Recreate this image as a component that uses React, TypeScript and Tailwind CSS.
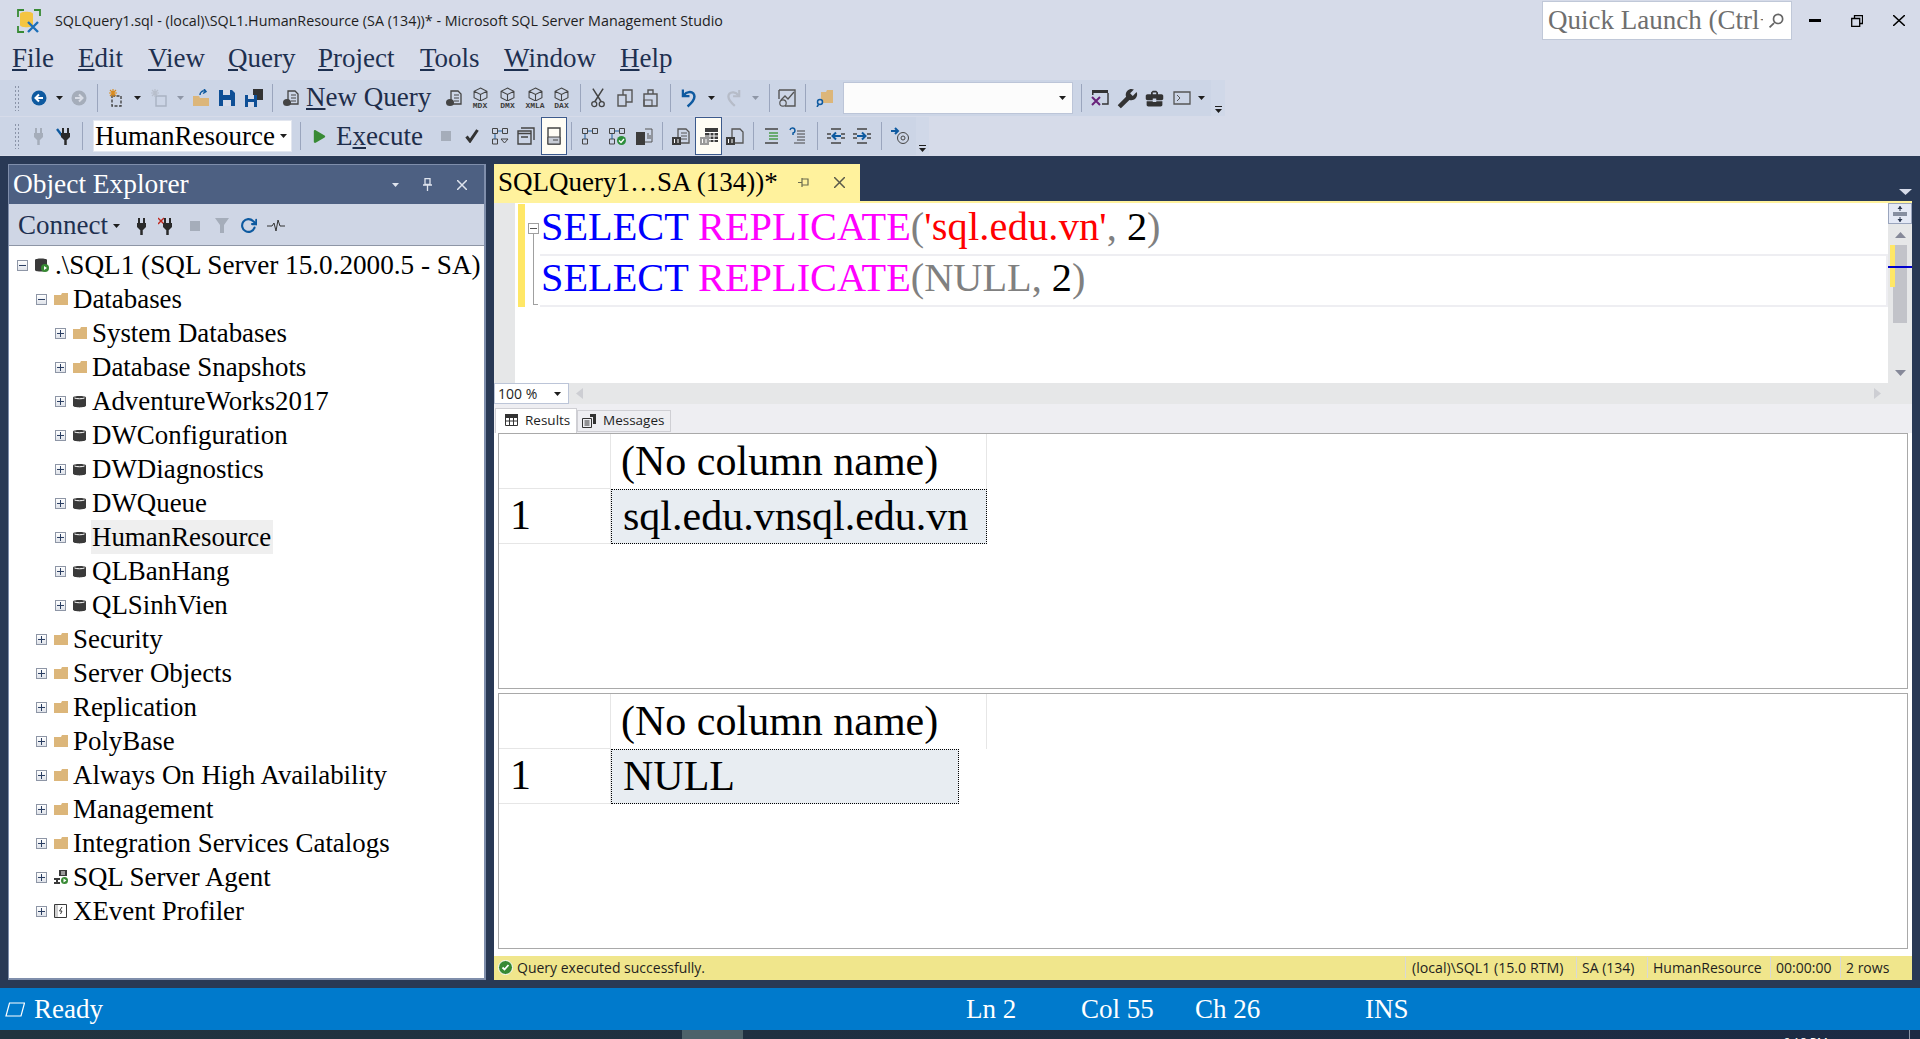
import type { ReactNode } from "react";
import { FaPlay } from "react-icons/fa";
import { FiRotateCw } from "react-icons/fi";
import { MdBuild, MdBusinessCenter, MdSearch } from "react-icons/md";

const serif = "font-['Liberation_Serif',serif]";
const sans = "font-['Open_Sans',sans-serif]";

const Caret = ({ c = "#1e1e1e" }: { c?: string }) => (
  <svg width="7" height="4" viewBox="0 0 7 4"><path d="M0 0h7L3.5 4z" fill={c} /></svg>
);

const Svg = ({ children, w = 18, h = 18 }: { children: ReactNode; w?: number; h?: number }) => (
  <svg className="shrink-0" width={w} height={h} viewBox="0 0 18 18" fill="none">{children}</svg>
);

// toolbar slot: a fixed width box with its content centred
const Slot = ({ w, children, className = "" }: { w: number; children?: ReactNode; className?: string }) => (
  <div style={{ width: w }} className={`h-full flex items-center justify-center shrink-0 ${className}`}>{children}</div>
);

const Sep = () => <div className="w-px h-[28px] bg-[#9aa5bd] shrink-0" />;

const Grip = () => (
  <div className="w-[6px] h-[26px] ml-[14px] shrink-0 bg-[radial-gradient(#8a94a8_1px,transparent_1px)] bg-[length:3px_4px]" />
);

const DocIcon = () => (
  <Svg>
    <path d="M6 2h7l3 3v10H6z" stroke="#444" strokeWidth="1.3" />
    <path d="M9 6h5M9 9h5M9 12h5" stroke="#444" />
    <ellipse cx="5" cy="13.5" rx="4" ry="3.5" fill="#444" />
  </Svg>
);

const CubeIcon = ({ label }: { label: string }) => (
  <div className="relative w-[18px] h-[24px] flex justify-center shrink-0">
    <svg className="mt-[1px]" width="15" height="15" viewBox="0 0 14 14" fill="none"><path d="M7 1l6 3v6l-6 3-6-3V4zM1 4l6 3 6-3M7 7v6" stroke="#444" /></svg>
    <span className="absolute bottom-0 text-[8px] leading-[9px] font-bold text-[#3c3c3c] font-['Liberation_Mono',monospace] bg-[#ccd5e6] px-px">{label}</span>
  </div>
);

const PlugIcon = ({ c = "#2a2a2a", x, link }: { c?: string; x?: boolean; link?: boolean }) => (
  <Svg>
    {x && <path d="M0 1l6 6M6 1L0 7" stroke="#c0261c" strokeWidth="1.4" />}
    {link && <path d="M1 2l6 8" stroke="#0e5aa0" strokeWidth="2.4" />}
    <path d="M7 1v5M12 1v5" stroke={c} strokeWidth="2" />
    <path d="M5 6h9v4l-3 3H8l-3-3z" fill={c} />
    <path d="M9.5 13v5" stroke={c} strokeWidth="2.5" />
  </Svg>
);

const GridDocIcon = ({ kind }: { kind: "text" | "grid" | "file" }) => (
  <Svg>
    {kind === "grid" ? (
      <path d="M5 1h13v14H5z" fill="#3c3c3c" />
    ) : (
      <path d="M6 2h8l3 3v11H6z" stroke="#555" strokeWidth="1.3" />
    )}
    {kind === "grid" && <path d="M5 5.5h13M5 9h13M5 12.5h13M10 5v10M14 5v10" stroke="#fff" />}
    {kind === "text" && <path d="M9 6h6M9 9h6M9 12h6" stroke="#555" />}
    <rect x="0" y="10" width="9" height="8" fill={kind === "grid" ? "#9a9a9a" : "#3c3c3c"} />
    <path d="M2.5 12v4M6 12v4" stroke="#fff" />
  </Svg>
);

const DiagramIcon = ({ badge, tri }: { badge?: boolean; tri?: boolean }) => (
  <Svg>
    <path d="M1.5 1.5h5v5h-5zM11.5 1.5h5v5h-5zM1.5 12h5v5h-5z" stroke="#444" />
    <path d="M7 4h4M4 7v5" stroke="#1c5c9c" />
    {tri && <path d="M10 12h7l-3.5 4z" stroke="#444" />}
    {badge && <circle cx="13.5" cy="13.5" r="4.5" fill="#2c8e3c" />}
    {badge && <path d="M11 13.5l2 2 3-3.5" stroke="#fff" strokeWidth="1.3" />}
  </Svg>
);

const IndentIcon = ({ flip }: { flip?: boolean }) => (
  <svg className="shrink-0" width="18" height="18" viewBox="0 0 18 18" fill="none" style={{ transform: flip ? "scaleX(-1)" : undefined }}>
    <path d="M4 2h10M4 16h10M0 7h4M0 11h4M14 7h4M14 11h4" stroke="#444" strokeWidth="1.4" />
    <path d="M14 9H6M9 5.5L5.5 9 9 12.5" stroke="#0e5aa0" strokeWidth="2" />
  </svg>
);

function MainToolbars() {
  return (
    <div className="flex flex-col mb-[1px] shrink-0">
      <div className="flex h-[36px] items-center mb-[1px]">
        <div className="flex items-center h-full w-[1211px] bg-[#ccd5e6]">
          <Grip />
          <Slot w={11} />
          <Slot w={16}>
            <svg width="16" height="16" viewBox="0 0 16 16"><circle cx="8" cy="8" r="7.5" fill="#0e5aa0" /><path d="M12 8H5M8 4.5L4.5 8 8 11.5" stroke="#fff" strokeWidth="2" fill="none" /></svg>
          </Slot>
          <Slot w={24}><Caret /></Slot>
          <Slot w={16}>
            <svg width="16" height="16" viewBox="0 0 16 16"><circle cx="8" cy="8" r="7.5" fill="#a5adba" /><path d="M4 8h7M8 4.5L11.5 8 8 11.5" stroke="#d8dce6" strokeWidth="2" fill="none" /></svg>
          </Slot>
          <Slot w={21}><Sep /></Slot>
          <Slot w={16}>
            <Svg><path d="M5 7h9v10H5z" stroke="#444" strokeWidth="1.4" strokeDasharray="3 1.5" /><path d="M6 0v8M2 4h8M3 1l6 6M9 1L3 7" stroke="#d98b1f" strokeWidth="1.2" /></Svg>
          </Slot>
          <Slot w={26}><Caret /></Slot>
          <Slot w={18}>
            <Svg><path d="M6 7h10v10H6z" stroke="#a9b2c2" strokeWidth="1.4" /><path d="M5 0v8M1 4h8M2 1l6 6M8 1L2 7" stroke="#b8bfcc" strokeWidth="1.2" /></Svg>
          </Slot>
          <Slot w={24}><Caret c="#8e96a6" /></Slot>
          <Slot w={17}>
            <Svg><path d="M1 7h6l1 2h9v8H1z" fill="#dcb67a" /><path d="M8 6a4 4 0 0 1 5-4M12 0l2 2.5-3 2" stroke="#0e5aa0" strokeWidth="1.5" /></Svg>
          </Slot>
          <Slot w={10} />
          <Slot w={16}>
            <svg width="16" height="16" viewBox="0 0 16 16"><path d="M0 0h13l3 3v13H0z" fill="#0e4f96" /><path d="M4 0h7v5H4zM4 10h8v6H4z" fill="#d6dbe9" /></svg>
          </Slot>
          <Slot w={10} />
          <Slot w={18}>
            <Svg><path d="M8 0h10v11H8z" fill="#333" /><path d="M0 6h12v12H0z" fill="#0e4f96" /><path d="M3 6h6v4H3zM3 13h6v5H3z" fill="#d6dbe9" /></Svg>
          </Slot>
          <Slot w={9} />
          <Sep />
          <Slot w={9} />
          <Slot w={18}><DocIcon /></Slot>
          <Slot w={6} />
          <div className={`${serif} w-[125px] text-[27px] leading-none text-[#1e2d4a] pb-[2px] whitespace-nowrap shrink-0`}><u>N</u>ew Query</div>
          <Slot w={13} />
          <Slot w={19}><DocIcon /></Slot>
          <Slot w={8} />
          <Slot w={18}><CubeIcon label="MDX" /></Slot>
          <Slot w={10} />
          <Slot w={17}><CubeIcon label="DMX" /></Slot>
          <Slot w={10} />
          <Slot w={18}><CubeIcon label="XMLA" /></Slot>
          <Slot w={9} />
          <Slot w={17}><CubeIcon label="DAX" /></Slot>
          <Slot w={10} />
          <Sep />
          <Slot w={10} />
          <Slot w={14}>
            <svg width="15" height="20" viewBox="0 0 15 20" fill="none"><path d="M2 0l9 14M13 0L4 14" stroke="#444" strokeWidth="1.6" /><circle cx="3.5" cy="16.5" r="2.7" stroke="#444" strokeWidth="1.4" /><circle cx="11.5" cy="16.5" r="2.7" stroke="#444" strokeWidth="1.4" /></svg>
          </Slot>
          <Slot w={12} />
          <Slot w={16}>
            <Svg><path d="M7 1h9v12H7z" stroke="#555" strokeWidth="1.4" /><path d="M2 6h8v11H2z" fill="#ccd5e6" stroke="#555" strokeWidth="1.4" /></Svg>
          </Slot>
          <Slot w={10} />
          <Slot w={15}>
            <Svg><path d="M2 5h13v12H2z" stroke="#555" strokeWidth="1.4" /><path d="M6 5V1h5v4" stroke="#555" strokeWidth="1.4" /><path d="M2 11h8v6H2z" stroke="#555" strokeWidth="1.2" /></Svg>
          </Slot>
          <Slot w={12} />
          <Sep />
          <Slot w={10} />
          <Slot w={16}>
            <svg width="17" height="20" viewBox="0 0 17 20" fill="none"><path d="M2 1v7h7" stroke="#0e5aa0" strokeWidth="2.4" /><path d="M3 7c3-4 8-4 10-2 2.5 3 1 8-6 14" stroke="#0e5aa0" strokeWidth="2.6" /></svg>
          </Slot>
          <Slot w={29}><Caret /></Slot>
          <Slot w={15}>
            <svg className="-scale-x-100" width="17" height="20" viewBox="0 0 17 20" fill="none"><path d="M2 1v7h7" stroke="#b6bcc8" strokeWidth="2.4" /><path d="M3 7c3-4 8-4 10-2 2.5 3 1 8-6 14" stroke="#b6bcc8" strokeWidth="2.6" /></svg>
          </Slot>
          <Slot w={28}><Caret c="#8e96a6" /></Slot>
          <Sep />
          <Slot w={8} />
          <Slot w={18}>
            <Svg><path d="M1 1h16v16H7" stroke="#555" strokeWidth="1.4" /><path d="M1 1v9" stroke="#555" strokeWidth="1.4" /><path d="M3 11l4-4 3 3 6-7" stroke="#555" strokeWidth="1.3" /><circle cx="5" cy="14" r="3.2" stroke="#555" strokeWidth="1.2" /></Svg>
          </Slot>
          <Slot w={9} />
          <Sep />
          <Slot w={10} />
          <Slot w={18}>
            <Svg><path d="M5 3h5l1-2h6v13H5z" fill="#dcb67a" /><circle cx="4" cy="13" r="2.5" stroke="#0e5aa0" strokeWidth="1.5" fill="#ccd5e6" /><path d="M2.5 15.5L1 18" stroke="#0e5aa0" strokeWidth="1.5" /></Svg>
          </Slot>
          <Slot w={9} />
          <div className="w-[230px] h-[32px] bg-[#fcfcfc] border border-[#bcc5d8] flex items-center justify-end pr-[6px] shrink-0"><Caret /></div>
          <Slot w={8} />
          <Sep />
          <Slot w={9} />
          <Slot w={18}>
            <Svg><path d="M17 4v11h-6" stroke="#333" strokeWidth="1.4" /><path d="M1 1h16v3H1zM1 4h1.5v2H1z" fill="#333" /><path d="M1 8l8 8M9 8l-8 8" stroke="#68217a" strokeWidth="2" /></Svg>
          </Slot>
          <Slot w={9} />
          <Slot w={18}><MdBuild className="text-[21px] text-[#333] -scale-x-100 shrink-0" /></Slot>
          <Slot w={10} />
          <Slot w={17}><MdBusinessCenter className="text-[21px] text-[#333] shrink-0" /></Slot>
          <Slot w={10} />
          <Slot w={18}>
            <Svg><path d="M1 3h16v12H1z" stroke="#555" strokeWidth="1.3" /><path d="M4 6l3 3-3 3" stroke="#555" /></Svg>
          </Slot>
          <Slot w={20}><Caret /></Slot>
        </div>
        <div className="w-[14px] h-full bg-[#d0d8e8] flex flex-col items-center justify-end pb-[3px] gap-[2px]">
          <div className="w-[7px] h-px bg-[#1e1e1e]" />
          <Caret />
        </div>
      </div>
      <div className="flex h-[38px] items-center">
        <div className="flex items-center h-full w-[916px] bg-[#ccd5e6]">
          <Grip />
          <Slot w={13} />
          <Slot w={10}><PlugIcon c="#a5adba" /></Slot>
          <Slot w={13} />
          <Slot w={17}><PlugIcon c="#2a2a2a" link /></Slot>
          <Slot w={9} />
          <Sep />
          <Slot w={10} />
          <div className={`w-[199px] h-[32px] bg-white border border-[#e2e6ef] flex items-center justify-between pl-[1px] pr-[4px] shrink-0 ${serif} text-[27px] text-black`}>
            HumanResource<Caret />
          </div>
          <Slot w={8} />
          <Sep />
          <Slot w={13} />
          <Slot w={10}><FaPlay className="text-[13px] text-[#388a34] shrink-0" /></Slot>
          <Slot w={12} />
          <div className={`${serif} w-[86px] text-[27px] leading-none text-[#1e2d4a] whitespace-nowrap shrink-0`}>E<u>x</u>ecute</div>
          <Slot w={19} />
          <Slot w={9}><div className="w-[10px] h-[10px] bg-[#a5adba] shrink-0" /></Slot>
          <Slot w={15} />
          <Slot w={13}>
            <svg className="shrink-0" width="14" height="14" viewBox="0 0 14 14" fill="none"><path d="M1.5 7.5L5 12l7.500-11" stroke="#333" strokeWidth="3" /></svg>
          </Slot>
          <Slot w={13} />
          <Slot w={18}><DiagramIcon tri /></Slot>
          <Slot w={8} />
          <Slot w={18}>
            <Svg><path d="M1 4h13v13H1z" stroke="#444" strokeWidth="1.4" /><path d="M4 1h13v12" stroke="#444" strokeWidth="1.4" /><path d="M1 6.5h13M4 10h7" stroke="#444" strokeWidth="1.6" /></Svg>
          </Slot>
          <Slot w={6} />
          <Slot w={26} className="bg-[#fffdf5] border border-[#3c5a8c]">
            <Svg><path d="M3 1h12v16H3z" stroke="#444" strokeWidth="1.4" /><path d="M3 10h12v7H3z" fill="#c8cdd6" stroke="#444" /><path d="M8 13h5" stroke="#444" /></Svg>
          </Slot>
          <Slot w={4} />
          <Sep />
          <Slot w={10} />
          <Slot w={16}><DiagramIcon /></Slot>
          <Slot w={10} />
          <Slot w={18}><DiagramIcon badge /></Slot>
          <Slot w={9} />
          <Slot w={17}>
            <Svg><path d="M1 5h9v13H1z" fill="#3c3c3c" /><path d="M10 2h7v13h-7" stroke="#555" /><path d="M13 6v6M15 8v4" stroke="#555" /></Svg>
          </Slot>
          <Slot w={10} />
          <Sep />
          <Slot w={9} />
          <Slot w={18}><GridDocIcon kind="text" /></Slot>
          <Slot w={5} />
          <Slot w={27} className="bg-[#fffdf5] border border-[#3c5a8c]"><GridDocIcon kind="grid" /></Slot>
          <Slot w={4} />
          <Slot w={18}><GridDocIcon kind="file" /></Slot>
          <Slot w={9} />
          <Sep />
          <Slot w={10} />
          <Slot w={16}>
            <Svg><path d="M2 2h13M2 16h13" stroke="#444" strokeWidth="1.3" /><path d="M6 6h9M6 9h9M6 12h9" stroke="#4a9c4a" strokeWidth="1.3" /></Svg>
          </Slot>
          <Slot w={10} />
          <Slot w={16}>
            <Svg><path d="M8 4h8M8 7h8M8 10h8M8 13h8M5 16h11" stroke="#444" strokeWidth="1.2" /><path d="M1 3a2.5 2.5 0 1 1 3 3v2" stroke="#0e5aa0" strokeWidth="1.5" /></Svg>
          </Slot>
          <Slot w={11} />
          <Sep />
          <Slot w={9} />
          <Slot w={18}><IndentIcon /></Slot>
          <Slot w={8} />
          <Slot w={18}><IndentIcon flip /></Slot>
          <Slot w={10} />
          <Sep />
          <Slot w={9} />
          <Slot w={18}>
            <Svg><path d="M0 4h7M4 1l3 3-3 3" stroke="#0e5aa0" strokeWidth="2" /><circle cx="12" cy="11" r="5.5" stroke="#444" /><circle cx="12" cy="11" r="2" stroke="#444" /></Svg>
          </Slot>
        </div>
        <div className="w-[13px] h-full bg-[#d0d8e8] flex flex-col items-center justify-end pb-[3px] gap-[2px]">
          <div className="w-[7px] h-px bg-[#1e1e1e]" />
          <Caret />
        </div>
      </div>
    </div>
  );
}

const Folder = () => (
  <svg width="14" height="12" viewBox="0 0 14 12"><path d="M0 2h7l1-2h6v12H0z" fill="#dcb67a" /></svg>
);

const Db = () => (
  <svg width="13" height="13" viewBox="0 0 13 13"><path d="M0 2.5C0 .5 13 .5 13 2.5v8c0 2.5-13 2.5-13 0z" fill="#3a3a3a" /><path d="M1.5 3c2.5 1 7.5 1 10 0" stroke="#fff" fill="none" /></svg>
);

const Agent = () => (
  <svg width="14" height="14" viewBox="0 0 14 14"><path d="M5 0h8v6H5z" fill="#3a3a3a" /><path d="M7 2h4M7 4h4" stroke="#fff" /><path d="M0 8h6v2H4v2h2v2H0v-2h2v-2H0z" fill="#3a3a3a" /><circle cx="10.5" cy="10.5" r="3.5" fill="#388a34" /><path d="M9.5 8.5l3 2-3 2z" fill="#fff" /></svg>
);

const Profiler = () => (
  <svg width="13" height="14" viewBox="0 0 13 14" fill="none"><path d="M.5.5h12v13H.5z" stroke="#3a3a3a" /><path d="M1 1h3v12H1z" fill="#d0d0d0" /><path d="M8 3L5.5 7H8L6.5 10" stroke="#3a3a3a" /></svg>
);

const Expander = ({ open }: { open?: boolean }) => (
  <div className="w-[11px] h-[11px] border border-[#8e96a6] bg-gradient-to-b from-white to-[#dfe3ea] flex items-center justify-center relative shrink-0">
    <div className="w-[7px] h-px bg-[#2b3f63]" />
    {!open && <div className="absolute w-px h-[7px] bg-[#2b3f63]" />}
  </div>
);

const databases = ["AdventureWorks2017", "DWConfiguration", "DWDiagnostics", "DWQueue", "HumanResource", "QLBanHang", "QLSinhVien"];
const topFolders = ["Security", "Server Objects", "Replication", "PolyBase", "Always On High Availability", "Management", "Integration Services Catalogs"];

const Row = ({ level, icon, label, open, active }: { level: 1 | 2; icon: ReactNode; label: string; open?: boolean; active?: boolean }) => (
  <div className={`h-[34px] flex items-center ${level === 1 ? "pl-[27px]" : "pl-[46px]"}`}>
    <Expander open={open} />
    <div className="w-[25px] pl-[7px] flex items-center shrink-0">{icon}</div>
    <span className={`h-[34px] leading-[34px] pl-[1px] pr-[2px] whitespace-nowrap ${active ? "bg-[#efefef]" : ""}`}>{label}</span>
  </div>
);

function ObjectExplorer() {
  return (
    <div className="w-[478px] flex flex-col border border-[#7f8eab] border-r-2 border-b-2 shrink-0 bg-white">
      <div className={`h-[39px] bg-[#4d6082] text-white flex items-center pl-[4px] shrink-0 ${serif} text-[27.4px]`}>
        <span className="flex-1">Object Explorer</span>
        <div className="w-[8px] mr-[24px] flex justify-center"><Caret c="#dfe4ee" /></div>
        <svg className="mr-[25px]" width="9" height="13" viewBox="0 0 9 13" fill="none"><path d="M2 .5h5v6H2zM0 7h9M4.5 7v6" stroke="#dfe4ee" strokeWidth="1.3" /></svg>
        <svg className="mr-[17px]" width="10" height="10" viewBox="0 0 10 10" fill="none"><path d="M0 0l10 10M10 0L0 10" stroke="#dfe4ee" strokeWidth="1.5" /></svg>
      </div>
      <div className="h-[42px] bg-[#cfd6e5] flex items-center border-b border-[#8e96a6] pl-[9px] pt-[2px] shrink-0">
        <span className={`${serif} text-[27px] text-[#1e3050] w-[95px] shrink-0`}>Connect</span>
        <Caret />
        <div className="w-[12px] shrink-0" />
        <PlugIcon />
        <div className="w-[8px] shrink-0" />
        <PlugIcon x />
        <div className="w-[14px] shrink-0" />
        <div className="w-[10px] h-[10px] bg-[#a5adba] shrink-0" />
        <div className="w-[15px] shrink-0" />
        <svg width="14" height="15" viewBox="0 0 14 15"><path d="M0 0h14L9 7v8H5V7z" fill="#a5adba" /></svg>
        <div className="w-[11px] shrink-0" />
        <FiRotateCw className="text-[17px] text-[#0e5aa0] stroke-[3] shrink-0" />
        <div className="w-[10px] shrink-0" />
        <svg width="18" height="12" viewBox="0 0 18 12" fill="none"><path d="M0 6h5l2-3 2 8 2-11 2 6h5" stroke="#333" /></svg>
      </div>
      <div className={`flex-1 min-h-0 pt-[2px] ${serif} text-[26.9px] text-black`}>
        <div className="h-[34px] flex items-center pl-[8px]">
          <Expander open />
          <div className="w-[27px] pl-[7px] flex shrink-0">
            <svg width="14" height="14" viewBox="0 0 14 14"><path d="M0 2C0 0 12 0 12 2v10c0 2-12 2-12 0z" fill="#3a3a3a" /><circle cx="10" cy="10" r="4" fill="#388a34" /><path d="M9 8l3 2-3 2z" fill="#fff" /></svg>
          </div>
          <span className="whitespace-nowrap text-[27.2px]">.\SQL1 (SQL Server 15.0.2000.5 - SA)</span>
        </div>
        <Row level={1} icon={<Folder />} label="Databases" open />
        <Row level={2} icon={<Folder />} label="System Databases" />
        <Row level={2} icon={<Folder />} label="Database Snapshots" />
        {databases.map((d) => (
          <Row key={d} level={2} icon={<Db />} label={d} active={d === "HumanResource"} />
        ))}
        {topFolders.map((f) => (
          <Row key={f} level={1} icon={<Folder />} label={f} />
        ))}
        <Row level={1} icon={<Agent />} label="SQL Server Agent" />
        <Row level={1} icon={<Profiler />} label="XEvent Profiler" />
      </div>
    </div>
  );
}

function Editor() {
  return (
    <div className="h-[180px] flex bg-white shrink-0">
      <div className="flex-1 flex min-w-0">
        <div className="w-[21px] bg-[#e6e7e8] shrink-0" />
        <div className="w-[7px] h-[103px] ml-[3px] mt-px bg-[#ffe766] shrink-0" />
        <div className="w-[15px] shrink-0 pl-[3px]">
          <div className="mt-[20px] w-[11px] h-[11px] border border-[#a0a0a0] flex items-center justify-center"><div className="w-[7px] h-px bg-[#555]" /></div>
          <div className="ml-[5px] w-[5px] h-[71px] border-l border-b border-[#a0a0a0]" />
        </div>
        <div className={`flex-1 ${serif} text-[40.3px] leading-none whitespace-pre`}>
          <div className="h-[51px] flex items-center pb-[3px] pl-[1px]">
            <span className="text-[#0000ff]">SELECT </span><span className="text-[#ff00ff]">REPLICATE</span><span className="text-[#808080]">(</span><span className="text-[#ff0000] tracking-[0.2px]">'sql.edu.vn'</span><span className="text-[#808080]">, </span><span className="text-black">2</span><span className="text-[#808080]">)</span>
          </div>
          <div className="h-[53px] flex items-center border-y-2 border-[#eeeef2] border-r-2 pb-[4px] pl-[1px]">
            <span className="text-[#0000ff]">SELECT </span><span className="text-[#ff00ff]">REPLICATE</span><span className="text-[#808080]">(NULL, </span><span className="text-black">2</span><span className="text-[#808080]">)</span>
          </div>
        </div>
      </div>
      <div className="w-[24px] bg-[#e6e7e8] flex flex-col relative shrink-0">
        <div className="h-[21px] bg-[#e4e9f6] border border-[#9aa5bd] flex items-center justify-center shrink-0">
          <svg width="14" height="18" viewBox="0 0 14 18" fill="none"><path d="M0 8h14M0 10h14M7 1v5M7 12v5" stroke="#29354d" /><path d="M4.5 4L7 1l2.5 3zM4.5 14L7 17l2.5-3z" fill="#29354d" /></svg>
        </div>
        <div className="h-[21px] flex items-center justify-center shrink-0"><svg width="11" height="6" viewBox="0 0 11 6"><path d="M5.5 0L11 6H0z" fill="#868999" /></svg></div>
        <div className="relative ml-[5px] w-[14px] h-[78px] bg-[#c2c3c9] shrink-0">
          <div className="absolute -left-[3px] top-0 w-[5px] h-[42px] bg-[#ffe766]" />
          <div className="absolute -left-[5px] top-[21px] w-[24px] h-[2px] bg-[#0000cd]" />
        </div>
        <div className="flex-1 flex items-end justify-center pb-[7px]"><svg width="11" height="6" viewBox="0 0 11 6"><path d="M5.5 6L11 0H0z" fill="#868999" /></svg></div>
      </div>
    </div>
  );
}

const GridPanel = ({ value, cellW }: { value: string; cellW: string }) => (
  <div className={`flex-1 border border-[#a9a9a9] bg-white ${serif} text-[42px] leading-none text-black`}>
    <div className="h-[55px] flex">
      <div className="w-[112px] h-full border-r border-b border-[#e6e6e6] shrink-0" />
      <div className="w-[376px] h-full border-r border-[#e6e6e6] flex items-center pl-[10px] pb-[2px] whitespace-nowrap">(No column name)</div>
    </div>
    <div className="h-[55px] flex">
      <div className="w-[112px] h-full border-r border-b border-[#e6e6e6] flex items-center pl-[11px] pb-[2px] shrink-0">1</div>
      <div className={`${cellW} h-full bg-[#e8edf2] border border-dotted border-black flex items-center pl-[11px] pb-[2px] whitespace-nowrap`}>{value}</div>
    </div>
  </div>
);

function ResultsPane() {
  return (
    <div className="flex-1 min-h-0 flex flex-col bg-[#eeeef2]">
      <div className="h-[21px] bg-[#e6e7e8] flex items-center shrink-0">
        <div className={`w-[75px] h-full bg-white border border-[#bcc5d8] flex items-center justify-between pl-[3px] pr-[7px] ${sans} text-[14px] text-[#1e1e1e]`}>
          100 %<Caret />
        </div>
        <svg className="ml-[7px]" width="7" height="11" viewBox="0 0 7 11"><path d="M7 0v11L0 5.5z" fill="#cdced3" /></svg>
        <div className="flex-1" />
        <svg className="mr-[31px]" width="7" height="11" viewBox="0 0 7 11"><path d="M0 0v11l7-5.5z" fill="#cdced3" /></svg>
      </div>
      <div className={`h-[29px] flex items-end pl-[1px] shrink-0 ${sans} text-[13.5px] text-[#1e1e1e]`}>
        <div className="w-[82px] h-[25px] bg-white border border-b-0 border-[#cfcfd4] flex items-center pl-[9px] pb-[2px] gap-[7px]">
          <svg width="13" height="12" viewBox="0 0 13 12" fill="none"><path d="M.5.5h12v11H.5zM.5 3.5h12M.5 7h12M4.5 3v9M8.5 3v9" stroke="#333" /><path d="M0 0h13v3H0z" fill="#333" /></svg>
          Results
        </div>
        <div className="w-[94px] h-[22px] border border-[#cfcfd4] flex items-center pl-[4px] pb-[1px] gap-[6px] mb-px">
          <svg width="15" height="14" viewBox="0 0 15 14" fill="none"><path d="M.5 4.5h9v9h-9zM2.5 7h5M2.5 9h5M2.5 11h5" stroke="#333" /><path d="M8 0h6v10h-3V3H8z" fill="#333" /></svg>
          Messages
        </div>
      </div>
      <div className="flex-1 min-h-0 flex flex-col gap-[4px] bg-white px-[4px] pb-[7px]">
        <GridPanel value="sql.edu.vnsql.edu.vn" cellW="w-[376px]" />
        <GridPanel value="NULL" cellW="w-[348px]" />
      </div>
      <div className={`h-[24px] bg-[#f0e68c] flex items-center pb-px shrink-0 ${sans} text-[14px] text-[#1e1e1e] whitespace-nowrap`}>
        <svg className="ml-[4px] mr-[4px]" width="15" height="15" viewBox="0 0 15 15"><circle cx="7.5" cy="7.5" r="7" fill="#388a34" stroke="#fff" /><path d="M4.5 7.5l2 2 4-4.5" stroke="#fff" strokeWidth="1.8" fill="none" /></svg>
        <span className="flex-1">Query executed successfully.</span>
        <div className="w-[171px] h-[21px] border-l border-[#d8d8d8] pl-[6px] leading-[21px] shrink-0 text-[14.2px]">(local)\SQL1 (15.0 RTM)</div>
        <div className="w-[71px] h-[21px] border-l border-[#d8d8d8] pl-[5px] leading-[21px] shrink-0">SA (134)</div>
        <div className="w-[123px] h-[21px] border-l border-[#d8d8d8] pl-[5px] leading-[21px] shrink-0">HumanResource</div>
        <div className="w-[70px] h-[21px] border-l border-[#d8d8d8] pl-[5px] leading-[21px] shrink-0">00:00:00</div>
        <div className="w-[72px] h-[21px] border-l border-[#d8d8d8] pl-[5px] leading-[21px] shrink-0">2 rows</div>
      </div>
    </div>
  );
}

export default function App() {
  return (
    <div className="w-[1920px] h-[1039px] bg-[#d6dbe9] flex flex-col overflow-hidden">
      {/* title bar */}
      <div className="h-[41px] flex items-center shrink-0">
        <svg className="ml-[17px] mr-[14px]" width="24" height="24" viewBox="0 0 24 24" fill="none">
          <path d="M1 8V1h6M17 1h6v6M1 17v6h6" stroke="#388a34" strokeWidth="1.8" />
          <path d="M3 5c0-3 13-3 13 0v11c0 3-13 3-13 0z" fill="#f4c542" />
          <path d="M11 13l10 10M21 13L11 23" stroke="#1c6fb8" strokeWidth="2.4" />
        </svg>
        <span className={`${sans} text-[14.3px] text-[#1e1e1e] flex-1`}>SQLQuery1.sql - (local)\SQL1.HumanResource (SA (134))* - Microsoft SQL Server Management Studio</span>
        <div className="w-[250px] h-[39px] bg-white border border-[#c0c8d8] flex items-center pl-[5px] pr-[3px] pt-px shrink-0 -mt-[1px]">
          <span className={`${serif} text-[27px] text-[#6f6f6f] w-[215px] overflow-hidden whitespace-nowrap`}>Quick Launch (Ctrl+Q)</span>
          <MdSearch className="text-[20px] text-[#666] -scale-x-100 ml-[3px]" />
        </div>
        <div className="w-[17px]" />
        <div className="w-[12px] h-[3px] bg-black" />
        <div className="w-[30px]" />
        <svg width="12" height="12" viewBox="0 0 12 12" fill="none"><path d="M3.5 3V.7h8v7.8H9M.7 3.5h8v8h-8z" stroke="#000" strokeWidth="1.3" /></svg>
        <div className="w-[30px]" />
        <svg width="12" height="11" viewBox="0 0 12 11" fill="none"><path d="M0 0l12 11M12 0L0 11" stroke="#000" strokeWidth="1.5" /></svg>
        <div className="w-[15px]" />
      </div>
      {/* menu */}
      <div className={`h-[39px] flex items-center pb-[4px] shrink-0 ${serif} text-[27px] text-[#1e3050]`}>
        <span className="w-[66px] ml-[12px]"><u>F</u>ile</span>
        <span className="w-[70px]"><u>E</u>dit</span>
        <span className="w-[80px]"><u>V</u>iew</span>
        <span className="w-[90px]"><u>Q</u>uery</span>
        <span className="w-[102px]"><u>P</u>roject</span>
        <span className="w-[84px]"><u>T</u>ools</span>
        <span className="w-[116px]"><u>W</u>indow</span>
        <span><u>H</u>elp</span>
      </div>
      <MainToolbars />
      {/* dock area */}
      <div className="flex-1 min-h-0 bg-[#293955] flex pt-[8px] pl-[8px] pb-[8px] gap-[8px]">
        <ObjectExplorer />
        <div className="flex-1 min-w-0 flex flex-col pr-[8px]">
          <div className="h-[37px] flex shrink-0 relative">
            <div className={`w-[366px] h-[37px] bg-[#fff29d] flex items-center pl-[4px] ${serif} text-[27px] text-black whitespace-nowrap`}>
              <span className="flex-1">SQLQuery1…SA (134))*</span>
              <svg className="mr-[25px]" width="11" height="9" viewBox="0 0 11 9" fill="none"><path d="M4 1h6v6H4zM4 0v9M0 4.5h4" stroke="#6b6b4f" strokeWidth="1.2" /></svg>
              <svg className="mr-[15px]" width="11" height="11" viewBox="0 0 11 11" fill="none"><path d="M0 0l11 11M11 0L0 11" stroke="#5a5a4a" strokeWidth="1.5" /></svg>
            </div>
            <svg className="absolute right-[0px] top-[25px]" width="13" height="6" viewBox="0 0 13 6"><path d="M0 0h13L6.5 6z" fill="#d6dbe9" /></svg>
          </div>
          <div className="h-[2px] bg-[#fff29d] shrink-0" />
          <Editor />
          <ResultsPane />
        </div>
      </div>
      {/* status bar */}
      <div className={`h-[42px] bg-[#007acc] text-white flex items-center shrink-0 ${serif} text-[27px]`}>
        <svg className="ml-[5px] mr-[9px]" width="20" height="15" viewBox="0 0 20 15" fill="none"><path d="M4.5 1h15l-3.5 13H1z" stroke="#fff" strokeWidth="1.2" /></svg>
        <span className="w-[932px]">Ready</span>
        <span className="w-[115px]">Ln 2</span>
        <span className="w-[114px]">Col 55</span>
        <span className="w-[170px]">Ch 26</span>
        <span>INS</span>
      </div>
      {/* taskbar sliver */}
      <div className="h-[9px] flex overflow-hidden shrink-0 bg-gradient-to-r from-[#21343f] to-[#1c2a44]">
        <div className="w-[682px]" />
        <div className="w-[61px] bg-[#4d626a]" />
        <div className={`ml-[1040px] pt-[6px] ${sans} text-[12px] leading-[14px] text-white whitespace-nowrap`}>6:18 PM</div>
        <div className="ml-[81px] w-px bg-[#8c96a6]" />
      </div>
    </div>
  );
}
